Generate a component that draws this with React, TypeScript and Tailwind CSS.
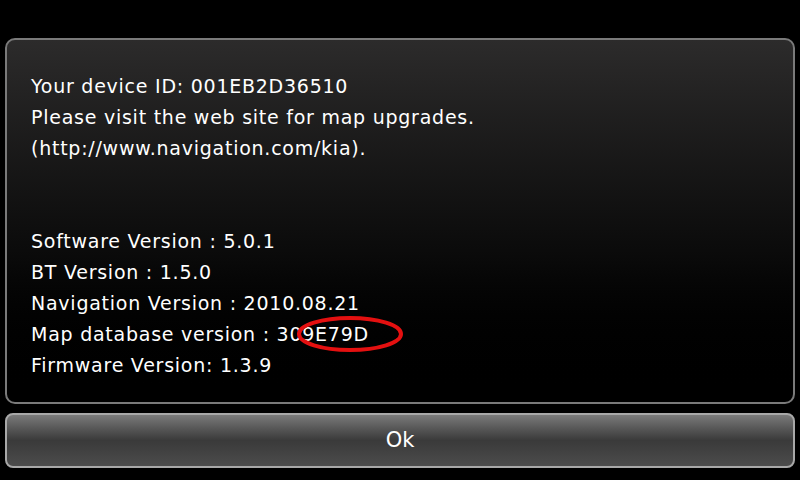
import React from "react";

const infoTop = [
  "Your device ID: 001EB2D36510",
  "Please visit the web site for map upgrades.",
  "(http://www.navigation.com/kia).",
];

const versions = [
  "Software Version : 5.0.1",
  "BT Version : 1.5.0",
  "Navigation Version : 2010.08.21",
  "Map database version : 309E79D",
  "Firmware Version: 1.3.9",
];

function App() {
  return (
    <div
      className="w-[800px] h-[480px] bg-black flex flex-col px-[5px] pt-[38px] text-white"
      style={{ fontFamily: '"DejaVu Sans", "Liberation Sans", sans-serif' }}
    >
      <div className="h-[366px] rounded-[10px] border-2 border-[#7a7a7a] bg-gradient-to-b from-[#2c2b2b] via-[#0a0a0a] via-60% to-black flex flex-col pl-[24px] pt-[31px]">
        <div className="flex flex-col text-[19px] leading-[31px] tracking-[0.75px]">
          {infoTop.map((l) => (
            <p key={l}>{l}</p>
          ))}
        </div>
        <div className="relative flex flex-col text-[19px] leading-[31px] tracking-[0.75px] mt-[62px]">
          {versions.map((l) => (
            <p key={l}>{l}</p>
          ))}
          <svg
            className="absolute left-[264px] top-[88px]"
            width="112"
            height="42"
            viewBox="0 0 112 42"
          >
            <ellipse
              cx="55"
              cy="20"
              rx="51"
              ry="16"
              fill="none"
              stroke="#e41010"
              strokeWidth="4"
            />
          </svg>
        </div>
      </div>
      <button className="mt-[9px] h-[55px] rounded-[8px] border-2 border-[#a8a8a8] bg-gradient-to-b from-[#7a7a7a] via-[#3a3a3a] to-[#4c4c4c] text-[21px] text-white flex items-center justify-center">
        Ok
      </button>
    </div>
  );
}

export default App;
